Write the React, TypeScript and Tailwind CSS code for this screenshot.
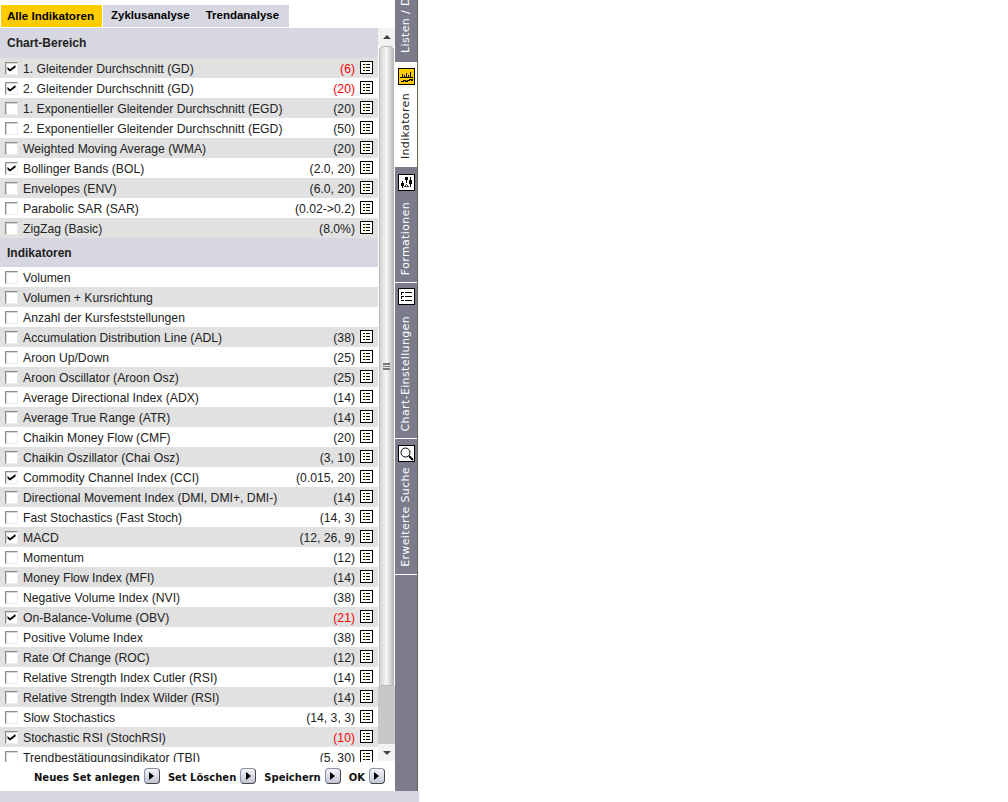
import React from 'react';

type Row = { name: string; params?: string; checked?: boolean; red?: boolean };

const chartRows: Row[] = [
  { name: '1. Gleitender Durchschnitt (GD)', params: '(6)', checked: true, red: true },
  { name: '2. Gleitender Durchschnitt (GD)', params: '(20)', checked: true, red: true },
  { name: '1. Exponentieller Gleitender Durchschnitt (EGD)', params: '(20)' },
  { name: '2. Exponentieller Gleitender Durchschnitt (EGD)', params: '(50)' },
  { name: 'Weighted Moving Average (WMA)', params: '(20)' },
  { name: 'Bollinger Bands (BOL)', params: '(2.0, 20)', checked: true },
  { name: 'Envelopes (ENV)', params: '(6.0, 20)' },
  { name: 'Parabolic SAR (SAR)', params: '(0.02->0.2)' },
  { name: 'ZigZag (Basic)', params: '(8.0%)' },
];

const indicatorRows: Row[] = [
  { name: 'Volumen' },
  { name: 'Volumen + Kursrichtung' },
  { name: 'Anzahl der Kursfeststellungen' },
  { name: 'Accumulation Distribution Line (ADL)', params: '(38)' },
  { name: 'Aroon Up/Down', params: '(25)' },
  { name: 'Aroon Oscillator (Aroon Osz)', params: '(25)' },
  { name: 'Average Directional Index (ADX)', params: '(14)' },
  { name: 'Average True Range (ATR)', params: '(14)' },
  { name: 'Chaikin Money Flow (CMF)', params: '(20)' },
  { name: 'Chaikin Oszillator (Chai Osz)', params: '(3, 10)' },
  { name: 'Commodity Channel Index (CCI)', params: '(0.015, 20)', checked: true },
  { name: 'Directional Movement Index (DMI, DMI+, DMI-)', params: '(14)' },
  { name: 'Fast Stochastics (Fast Stoch)', params: '(14, 3)' },
  { name: 'MACD', params: '(12, 26, 9)', checked: true },
  { name: 'Momentum', params: '(12)' },
  { name: 'Money Flow Index (MFI)', params: '(14)' },
  { name: 'Negative Volume Index (NVI)', params: '(38)' },
  { name: 'On-Balance-Volume (OBV)', params: '(21)', checked: true, red: true },
  { name: 'Positive Volume Index', params: '(38)' },
  { name: 'Rate Of Change (ROC)', params: '(12)' },
  { name: 'Relative Strength Index Cutler (RSI)', params: '(14)' },
  { name: 'Relative Strength Index Wilder (RSI)', params: '(14)' },
  { name: 'Slow Stochastics', params: '(14, 3, 3)' },
  { name: 'Stochastic RSI (StochRSI)', params: '(10)', checked: true, red: true },
  { name: 'Trendbestätigungsindikator (TBI)', params: '(5, 30)' },
];

const Checkbox = ({ checked }: { checked?: boolean }) => (
  <span className="w-[13px] h-[13px] mt-px flex-none bg-white border border-t-[#8c8c8c] border-l-[#8c8c8c] border-r-[#ececec] border-b-[#ececec] shadow-[inset_1px_1px_0_#d8d8d8]">
    {checked && (
      <svg viewBox="0 0 11 11" className="w-[11px] h-[11px]">
        <path d="M1.5 4L4 6.2 9.5 2v2.5L4 8.5 1.5 6.5z" fill="#000" />
      </svg>
    )}
  </span>
);

const ListIcon = () => (
  <svg viewBox="0 0 13 13" className="w-[13px] h-[13px] -mt-[2px]" shapeRendering="crispEdges">
    <rect x="0.5" y="0.5" width="12" height="12" fill="#fff" stroke="#000" />
    <path d="M5 2h1v9H5z" fill="#fff4b8" />
    <path d="M3 3h2v1H3zM6 3h4v1H6zM3 6h2v1H3zM6 6h4v1H6zM3 9h2v1H3zM6 9h4v1H6z" fill="#000" />
  </svg>
);

const IndicatorRow = ({ row, shaded }: { row: Row; shaded: boolean }) => (
  <div className={`h-5 flex-none flex items-center pl-[5px] pr-[5px] ${shaded ? 'bg-[#e1e1e1]' : 'bg-white'}`}>
    <Checkbox checked={row.checked} />
    <span className="ml-[5px] mt-[2px] text-[12.2px] text-[#222]">{row.name}</span>
    <span className={`ml-auto mt-[2px] text-[12.2px] ${row.red ? 'text-[#ff0000]' : 'text-[#222]'}`}>{row.params}</span>
    <span className="w-[13px] ml-[5px] flex-none">{row.params && <ListIcon />}</span>
  </div>
);

const SectionHeader = ({ title, className }: { title: string; className: string }) => (
  <div className={`flex-none flex items-center bg-[#d6d7e0] pl-[7px] font-bold text-xs text-[#222] ${className}`}>{title}</div>
);

const Scrollbar = () => (
  <div className="w-[17px] flex-none flex flex-col bg-white pb-px">
    <div className="h-[18px] flex-none flex items-center justify-center bg-[#f2f2f2]">
      <span className="w-0 h-0 border-x-[4px] border-x-transparent border-b-[4px] border-b-[#444]" />
    </div>
    <div className="h-[640px] flex-none mx-px rounded-t-sm border border-[#b8b8b8] bg-gradient-to-r from-[#d4d4d4] via-[#f6f6f6] to-[#bdbdbd] flex items-center justify-center">
      <span className="w-[7px] h-[7px] border-y border-[#777] bg-[linear-gradient(#777_1px,transparent_1px)] bg-[length:100%_2px]" />
    </div>
    <div className="flex-1 bg-[#c8c8c8]" />
    <div className="h-[17px] flex-none flex items-center justify-center bg-[#f2f2f2]">
      <span className="w-0 h-0 border-x-[4px] border-x-transparent border-t-[4px] border-t-[#444]" />
    </div>
  </div>
);

const FooterAction = ({ label }: { label: string }) => (
  <div className="flex items-center gap-[4px]">
    <span className="mt-[2px] font-['DejaVu_Sans',sans-serif] font-bold text-[10px] text-[#111]">{label}</span>
    <span className="w-[16px] h-[16px] -mt-[2px] flex items-center justify-center rounded-sm border border-[#8a8fa8] border-b-[#444] border-r-[#444] bg-gradient-to-b from-[#f4f4f8] to-[#c4c6d6]">
      <span className="w-0 h-0 border-y-[4px] border-y-transparent border-l-[5px] border-l-black" />
    </span>
  </div>
);

const SideTab = ({ label, icon, active, className, textClass }: { label: string; icon?: React.ReactNode; active?: boolean; className: string; textClass: string }) => (
  <div className={`flex-none flex flex-col items-center ${active ? 'bg-white text-[#222]' : 'text-white'} ${className}`}>
    {icon}
    <span className={`[writing-mode:vertical-rl] rotate-180 mr-[2px] font-['DejaVu_Sans',sans-serif] text-[11px] tracking-[0.35px] leading-none whitespace-nowrap ${textClass}`}>{label}</span>
  </div>
);

const IconBox = ({ children, bg }: { children: React.ReactNode; bg: string }) => (
  <svg viewBox="0 0 17 17" className="w-[17px] h-[17px] flex-none" shapeRendering="crispEdges">
    <rect x="0.5" y="0.5" width="16" height="16" fill={bg} stroke="#000" />
    {children}
  </svg>
);

export default function App() {
  return (
    <div className="w-[1008px] h-[802px] bg-white flex flex-col font-['Liberation_Sans',Arial,sans-serif] overflow-hidden">
      <div className="w-[419px] h-[791px] flex-none flex">
        <div className="w-[395px] flex-none flex flex-col">
          <div className="h-[28px] flex-none pt-[5px] pl-px flex">
            <div className="w-[101px] h-[22px] pr-[2px] bg-[#ffcc00] font-bold text-[11.6px] text-black flex items-center justify-center">Alle Indikatoren</div>
            <div className="w-[186px] ml-px h-[22px] bg-[#d6d7e0] font-bold text-[11.5px] text-black flex items-center">
              <span className="ml-[8px]">Zyklusanalyse</span>
              <span className="ml-[16px]">Trendanalyse</span>
            </div>
          </div>
          <div className="h-[734px] flex-none flex overflow-hidden">
            <div className="w-[378px] flex-none flex flex-col overflow-hidden">
              <SectionHeader title="Chart-Bereich" className="h-[30px]" />
              {chartRows.map((row, i) => (
                <IndicatorRow key={row.name} row={row} shaded={i % 2 === 0} />
              ))}
              <SectionHeader title="Indikatoren" className="h-[29px]" />
              {indicatorRows.map((row, i) => (
                <IndicatorRow key={row.name} row={row} shaded={i % 2 === 1} />
              ))}
            </div>
            <Scrollbar />
          </div>
          <div className="flex-1 flex items-center pl-[34px] gap-[8px]">
            <FooterAction label="Neues Set anlegen" />
            <FooterAction label="Set Löschen" />
            <FooterAction label="Speichern" />
            <FooterAction label="OK" />
          </div>
        </div>
        <div className="w-[22px] flex-none bg-[#7b7b8b] flex flex-col overflow-hidden">
          <div className="h-[62px] flex-none flex flex-col items-center justify-end overflow-hidden text-white">
            <span className="[writing-mode:vertical-rl] rotate-180 mr-[2px] font-['DejaVu_Sans',sans-serif] text-[11px] tracking-[0.35px] leading-none whitespace-nowrap mb-[9px]">Listen / Depots</span>
          </div>
          <SideTab
            active
            label="Indikatoren"
            className="h-[105px] pt-[6px]"
            textClass="mt-[8px]"
            icon={
              <IconBox bg="#ffcc00">
                <path d="M4 6h1v3H4zM6 7h1v2H6zM8 5h1v4H8zM10 7h1v2h-1zM12 4h1v5h-1zM2 9h13v1H2z" fill="#000" />
                <path d="M3 13h2v-1h2v1h2v-1h2v-1h2v1h1v-1h1" fill="none" stroke="#000" />
              </IconBox>
            }
          />
          <SideTab
            label="Formationen"
            className="h-[116px] pt-[7px] border-b border-white"
            textClass="mt-[11px]"
            icon={
              <IconBox bg="#fff">
                <path d="M3 9h3v3H3zM4 7h1v7H4zM11 6h3v4h-3zM12 3h1v10h-1zM7 3h3v3H7zM8 6h1v3H8z" fill="#000" />
                <path d="M6 12h5v1H6zM7 11h1v1H7zM9 11h1v1H9zM8 10h1v1H8z" fill="#444" />
              </IconBox>
            }
          />
          <SideTab
            label="Chart-Einstellungen"
            className="h-[156px] pt-[5px] border-b border-white"
            textClass="mt-[11px]"
            icon={
              <IconBox bg="#fff">
                <path d="M3 4h3v1H3zM7 4h7v1H7zM3 5h1v2H3zM3 8h3v1H3zM7 8h7v1H7zM3 9h1v2H3zM3 12h3v1H3zM7 12h7v1H7z" fill="#000" />
              </IconBox>
            }
          />
          <SideTab
            label="Erweiterte Suche"
            className="h-[136px] pt-[6px] border-b border-white"
            textClass="mt-[5px]"
            icon={
              <IconBox bg="#fff">
                <g shapeRendering="auto">
                  <circle cx="7.5" cy="7.5" r="4.5" fill="none" stroke="#000" />
                  <path d="M11 11l4 4" stroke="#000" strokeWidth="2" />
                </g>
              </IconBox>
            }
          />
        </div>
        <div className="w-px flex-none bg-[#66665a]" />
        <div className="w-px flex-none bg-[#fdfbe8]" />
      </div>
      <div className="w-[419px] h-[11px] flex-none bg-[#d6d7e0]" />
    </div>
  );
}
